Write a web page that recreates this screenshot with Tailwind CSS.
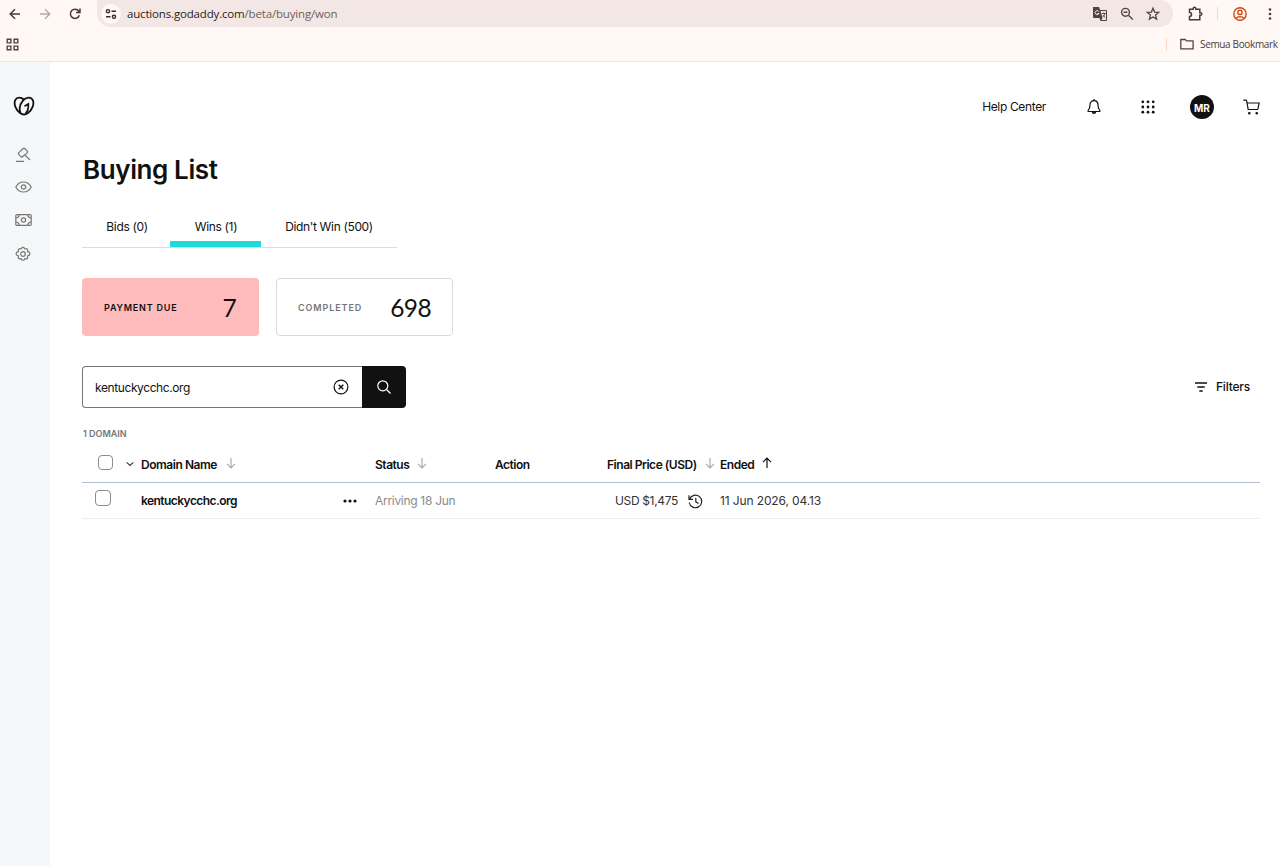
<!DOCTYPE html>
<html lang="en">

<head>
  <meta charset="UTF-8" />
  <meta name="viewport" content="width=device-width, initial-scale=1" />
  <script src="https://cdn.jsdelivr.net/npm/@tailwindcss/browser@4"></script>
  <title>Buying List</title>
</head>

<body class="flex flex-col h-screen overflow-hidden bg-white text-[#111] font-['Inter',sans-serif]">
  <!-- browser toolbar -->
  <header class="h-[62px] shrink-0 bg-[#fff8f5] border-b border-[#f6e3db] font-['Open_Sans',sans-serif] text-[#4d3b35]">
    <div class="flex items-center h-[27px]">
      <div class="flex items-center gap-[14px] pl-[7px] w-[97px] shrink-0">
        <svg class="size-4" viewBox="0 0 16 16" fill="none" stroke="#51372f" stroke-width="1.500"><path d="M13 8H3.500M8 3.200L3.200 8L8 12.800" /></svg>
        <svg class="size-4" viewBox="0 0 16 16" fill="none" stroke="#b5aaa6" stroke-width="1.400"><path d="M3 8h9.500M8 3.200L12.800 8L8 12.800" /></svg>
        <svg class="size-4" viewBox="0 0 16 16" fill="none" stroke="#51372f" stroke-width="1.500"><path d="M12.400 9.200A4.600 4.600 0 1 1 11.700 5L12.800 6.300M13 2.500v4H9" /></svg>
      </div>
      <div class="flex items-center h-[27px] w-[1076px] bg-[#f2e7e5] rounded-r-[14px] rounded-bl-[14px] pl-[4px] pr-[12px]">
        <div class="flex items-center justify-center size-5 rounded-full bg-[#fff8f5]">
          <svg class="size-3" viewBox="0 0 12 12" fill="none" stroke="#3b2d29" stroke-width="1.400"><circle cx="3" cy="3.200" r="1.600" /><path d="M6.500 3.200H11M1 8.800h4.500" /><circle cx="9" cy="8.800" r="1.600" /></svg>
        </div>
        <p class="ml-[6px] mt-px text-[11.500px] leading-4 tracking-[-0.17px] text-[#2b2220]">auctions.godaddy.com<span class="text-[#6e5f5a]">/beta/buying/won</span></p>
        <div class="flex items-center gap-[10.500px] ml-auto">
          <svg class="size-4" viewBox="0 0 16 16"><path d="M1 1h6l1.200 3H14a1 1 0 0 1 1 1v9a1 1 0 0 1-1 1H8.500l-1-3H2a1 1 0 0 1-1-1z" fill="#51433f" /><path d="M8.600 5H14v9H9.500l1-2z" fill="#f2e7e5" /><path d="M7 5.800A2 2 0 1 0 7 7.500H5.200" stroke="#f2e7e5" fill="none" /><path d="M9.800 7.500h4M11.800 6.500v1M13 7.500c-.4 1.700-1.300 2.800-2.500 3.700M11 9c.5 1 1.200 1.700 2.200 2.300" stroke="#51433f" stroke-width=".9" fill="none" /></svg>
          <svg class="size-4" viewBox="0 0 16 16" fill="none" stroke="#51433f" stroke-width="1.400"><circle cx="6.500" cy="6.300" r="3.900" /><path d="M9.400 9.200L13.800 13.500M4.600 6.300h3.800" /></svg>
          <svg class="size-4" viewBox="0 0 16 16" fill="none" stroke="#51433f" stroke-width="1.300"><path d="M8 2.300l1.600 3.800 4.100.3-3.100 2.700 1 4L8 10.900l-3.600 2.200 1-4L2.300 6.400l4.100-.3z" /></svg>
        </div>
      </div>
      <div class="flex items-center ml-[13px]">
        <svg class="size-[18px]" viewBox="0 0 18 18" fill="none" stroke="#51372f" stroke-width="1.500"><path d="M3.500 4.300h3.700V3.500a1 1 0 0 1 2.600 0v.8h4v3.400h.7a1.200 1.200 0 0 1 0 2.600h-.7v4.400H3.500v-3.200a1.900 1.900 0 0 0 0-4z" /></svg>
        <div class="w-px h-[13px] bg-[#fad7c5] ml-[13px]"></div>
        <svg class="size-4 ml-[14px]" viewBox="0 0 16 16" fill="none" stroke="#cf4b12" stroke-width="1.400"><circle cx="8" cy="8" r="6.200" /><circle cx="8" cy="6.400" r="2.100" /><path d="M3.800 12.400c2.300-2.200 6.100-2.200 8.400 0" /></svg>
        <svg class="w-1 h-3 ml-[20px]" viewBox="0 0 4 12" fill="#51372f"><circle cx="2" cy="1.500" r="1.300" /><circle cx="2" cy="6" r="1.300" /><circle cx="2" cy="10.500" r="1.300" /></svg>
      </div>
    </div>
    <div class="flex items-center h-[34px] pl-[6px] pr-[2px]">
      <svg class="size-[13px] shrink-0" viewBox="0 0 13 13" fill="none" stroke="#51433f" stroke-width="1.400"><path d="M1.200 1.200h3.700v3.700h-3.700zM8.100 1.200h3.700v3.700H8.100zM1.200 8.100h3.700v3.700h-3.700zM8.100 8.100h3.700v3.700H8.100z" /></svg>
      <div class="w-px h-[13px] bg-[#fad7c5] ml-auto"></div>
      <svg class="w-[14px] h-3 ml-[13px] shrink-0" viewBox="0 0 14 12" fill="none" stroke="#51433f" stroke-width="1.300"><path d="M.8 1.500h4.400l1.400 1.400h6.500v8H.8z" stroke-linejoin="round" /></svg>
      <span class="w-[78px] ml-[6px] mt-px text-[10px] whitespace-nowrap tracking-[-0.35px]">Semua Bookmark</span>
    </div>
  </header>

  <div class="flex flex-1 min-h-0">
    <aside class="flex flex-col items-center w-[50px] shrink-0 bg-[#f5f7f8] pr-[4px] pt-[34px] text-[#767676]">
      <svg class="w-[22px] h-5 ml-[2px]" viewBox="0 0 22 20" fill="none" stroke="#111" stroke-width="1.800"><path d="M11 3.700C8 .8 3.800.9 2.200 4.200C.5 8 2.800 13.800 7 17C9.600 18.900 12.400 18.900 15 17C19.200 13.800 21.500 8 19.800 4.200C18 .7 13.200.8 9.900 4.700C6.300 9 6 13.600 7.800 17.300" /><path d="M11.500 10.300L15.300 8v3.200C15.200 13.800 14.200 16 12.600 17.600" stroke-width="1.700" /></svg>
      <svg class="size-4 mt-[31px]" viewBox="0 0 16 16" fill="none" stroke="currentColor" stroke-width="1.200" stroke-linejoin="round"><path d="M8.200 1.500a1 1 0 0 1 1.400 0l2.700 2.700a1 1 0 0 1 0 1.400L7.500 9.800a1 1 0 0 1-1.400 0L3.700 7.300a1 1 0 0 1 0-1.400zM10 8l5 5M1 14.300h8" /></svg>
      <svg class="w-[17px] h-4 mt-[16px]" viewBox="0 0 17 16" fill="none" stroke="currentColor" stroke-width="1.200"><path d="M.8 8C2.500 4.800 5.200 3 8.500 3s6 1.800 7.700 5c-1.700 3.200-4.400 5-7.700 5S2.500 11.200.8 8z" /><circle cx="8.500" cy="8" r="2.200" /></svg>
      <svg class="w-[17px] h-4 mt-[17px]" viewBox="0 0 17 16" fill="none" stroke="currentColor" stroke-width="1.200"><rect x=".8" y="2.600" width="15.400" height="10.800" rx="1.200" /><circle cx="8.500" cy="8" r="2.200" /><path d="M1 6c1.800 0 3.300-1.500 3.300-3.300M16 6c-1.800 0-3.300-1.500-3.300-3.300M1 10c1.800 0 3.300 1.500 3.300 3.300M16 10c-1.800 0-3.300 1.500-3.300 3.300" /></svg>
      <svg class="size-4 mt-[18px]" viewBox="0 0 16 16" fill="none" stroke="currentColor" stroke-width="1.200" stroke-linejoin="round"><path d="M6.500 2.400a1.600 1.600 0 0 1 3 0l.3.600.7-.2a1.600 1.600 0 0 1 2.100 2.100l-.2.700.7.300a1.600 1.600 0 0 1 0 3.600l-.7.500.2.700a1.600 1.600 0 0 1-2.100 2.100l-.7-.2-.3.600a1.600 1.600 0 0 1-3 0l-.3-.6-.7.200a1.600 1.600 0 0 1-2.100-2.100l.2-.7-.7-.5a1.600 1.600 0 0 1 0-3.600l.7-.3-.2-.7a1.600 1.600 0 0 1 2.100-2.100l.7.200z" /><circle cx="8" cy="8" r="2.300" /></svg>
    </aside>

    <main class="flex-1 min-w-0 pl-[32px] pr-[20px]">
      <div class="flex items-center justify-end h-[24px] mt-[33px]">
        <a href="#" class="text-[12px] tracking-[-0.35px]">Help Center</a>
        <svg class="size-4 ml-[40px]" viewBox="0 0 16 16" fill="none" stroke="#111" stroke-width="1.200"><path d="M8 1.700c-2.600 0-4 1.800-4 4.200 0 2.800-.6 4.200-1.800 5.500-.4.600-.2 1.100.5 1.100h10.600c.7 0 .9-.5.5-1.100C12.600 10.100 12 8.700 12 5.900c0-2.400-1.400-4.200-4-4.200z" /><path d="M8 .3v1.400M6.500 13c.3 1.500 2.700 1.500 3 0" stroke-width="1.600" /></svg>
        <svg class="size-[14px] ml-[39px]" viewBox="0 0 14 14" fill="#111"><circle cx="1.800" cy="1.800" r="1.400" /><circle cx="7" cy="1.800" r="1.400" /><circle cx="12.200" cy="1.800" r="1.400" /><circle cx="1.800" cy="7" r="1.400" /><circle cx="7" cy="7" r="1.400" /><circle cx="12.200" cy="7" r="1.400" /><circle cx="1.800" cy="12.200" r="1.400" /><circle cx="7" cy="12.200" r="1.400" /><circle cx="12.200" cy="12.200" r="1.400" /></svg>
        <div class="flex items-center justify-center size-6 ml-[35px] rounded-full bg-[#111] text-white text-[10px] font-bold pt-[2px]">MR</div>
        <svg class="w-[17px] h-4 ml-[29px]" viewBox="0 0 17 16" fill="none" stroke="#111" stroke-width="1.200"><path d="M.3 1.200h2.400c.6 0 .9.300 1 .8l1.500 8.500h9.600M4.200 4h11.900l-1.300 6.500" /><circle cx="6.300" cy="14.200" r=".7" fill="#111" /><circle cx="13.700" cy="14.200" r=".7" fill="#111" /></svg>
      </div>

      <h1 class="mt-[35px] h-[31px] leading-[32px] text-[26px] font-semibold tracking-[-0.4px] ml-px">Buying List</h1>

      <nav class="flex w-[315px] h-[43px] mt-[20px] border-b border-[#dcdcdc] text-[12px] leading-[44px] tracking-[-0.35px]">
        <a href="#" class="w-[88px] pl-[2px] text-center">Bids (0)</a>
        <a href="#" class="w-[91px] pl-px h-[42px] text-center border-b-[6px] border-[#1bdbdb]">Wins (1)</a>
        <a href="#" class="w-[136px] text-center whitespace-nowrap">Didn't Win (500)</a>
      </nav>

      <div class="flex gap-[17px] mt-[30px]">
        <div class="flex items-center justify-between w-[177px] h-[58px] pl-[22px] pr-[23px] rounded bg-[#ffbbbb]">
          <span class="text-[9px] font-semibold tracking-[0.8px] pt-[2px]">PAYMENT DUE</span>
          <span class="font-['Lato',sans-serif] text-[24.500px] tracking-[-0.8px] pt-[3px]">7</span>
        </div>
        <div class="flex items-center justify-between w-[177px] h-[58px] pl-[21px] pr-[21px] rounded border border-[#d6dbde]">
          <span class="text-[9px] font-semibold tracking-[0.9px] text-[#767676] pt-[2px]">COMPLETED</span>
          <span class="font-['Lato',sans-serif] text-[24.500px] tracking-[-0.6px] pt-[3px]">698</span>
        </div>
      </div>

      <div class="flex items-center justify-between mt-[30px] h-[42px]">
        <div class="flex h-[42px]">
          <div class="flex items-center justify-between w-[280px] pl-[12px] pr-[13px] border border-r-0 border-[#767676] rounded-l">
            <span class="text-[12px] tracking-[-0.4px] pt-[2px]">kentuckycchc.org</span>
            <svg class="size-4" viewBox="0 0 16 16" fill="none" stroke="#111" stroke-width="1.200"><circle cx="8" cy="8" r="6.900" /><path d="M5.700 5.700l4.600 4.600M10.300 5.700l-4.600 4.600" stroke-width="1.400" /></svg>
          </div>
          <button class="flex items-center justify-center w-[44px] bg-[#111] rounded-r">
            <svg class="size-4" viewBox="0 0 16 16" fill="none" stroke="#fff" stroke-width="1.200"><circle cx="6.800" cy="6.800" r="5" /><path d="M10.500 10.500l4 4" /></svg>
          </button>
        </div>
        <button class="flex items-center mr-[10px] text-[12px] font-medium tracking-[-0.2px]">
          <svg class="w-3 h-[10px] mr-[9px]" viewBox="0 0 12 10" fill="none" stroke="#111" stroke-width="1.300"><path d="M0 1h12M2.300 5h7.400M4.300 9h3.400" /></svg>
          Filters
        </button>
      </div>

      <p class="mt-[20px] h-[12px] leading-[12px] text-[9px] font-semibold text-[#767676] pl-px">1 DOMAIN</p>

      <!-- table head -->
      <div class="grid grid-cols-[59px_234px_120px_112px_113px_1fr] items-center h-[43px] pt-[7px] border-b border-[#b2bfcb] text-[12px] font-semibold tracking-[-0.47px] whitespace-nowrap">
        <div class="flex items-center pl-[16px] pb-[5px]">
          <span class="size-[15px] border border-[#8c8c8c] rounded-[4px]"></span>
          <svg class="w-2 h-2 ml-[13px] mt-1" viewBox="0 0 8 8" fill="none" stroke="#333" stroke-width="1.100"><path d="M.7 2.300L4 5.400l3.300-3.100" /></svg>
        </div>
        <div class="flex items-center">Domain Name
          <svg class="w-[10px] h-3 ml-[9px] mb-1" viewBox="0 0 10 12" fill="none" stroke="#aaa" stroke-width="1.200"><path d="M5 1v10M1 6.800l4 4 4-4" /></svg>
        </div>
        <div class="flex items-center">Status
          <svg class="w-[10px] h-3 ml-[8px] mb-1" viewBox="0 0 10 12" fill="none" stroke="#aaa" stroke-width="1.200"><path d="M5 1v10M1 6.800l4 4 4-4" /></svg>
        </div>
        <div>Action</div>
        <div class="flex items-center">Final Price (USD)
          <svg class="w-[10px] h-3 ml-auto mr-[5px] mb-1" viewBox="0 0 10 12" fill="none" stroke="#aaa" stroke-width="1.200"><path d="M5 1v10M1 6.800l4 4 4-4" /></svg>
        </div>
        <div class="flex items-center">Ended
          <svg class="w-[10px] h-3 ml-[8px] mb-1" viewBox="0 0 10 12" fill="none" stroke="#111" stroke-width="1.200"><path d="M5 11V1M1 5.200l4-4 4 4" /></svg>
        </div>
      </div>

      <div class="grid grid-cols-[59px_234px_120px_112px_113px_1fr] items-center h-[36px] pt-px border-b border-[#ececec] text-[12px] whitespace-nowrap">
        <div class="pl-[13px] pb-[6px]"><span class="block size-[16px] border border-[#8c8c8c] rounded-[4px]"></span></div>
        <div class="flex items-center justify-between pr-[18px] font-semibold tracking-[-0.55px]">kentuckycchc.org
          <svg class="w-[14px] h-1" viewBox="0 0 14 4" fill="#111"><circle cx="2" cy="2" r="1.600" /><circle cx="7" cy="2" r="1.600" /><circle cx="12" cy="2" r="1.600" /></svg>
        </div>
        <div class="text-[#8a8a8a] tracking-[-0.3px]">Arriving 18 Jun</div>
        <div></div>
        <div class="flex items-center justify-between pl-[8px] pr-[17px] text-[#333] tracking-[-0.35px]">USD $1,475
          <svg class="size-[15px]" viewBox="0 0 15 15" fill="none" stroke="#222" stroke-width="1.200"><path d="M1.500 5.200A6.300 6.300 0 1 1 1.200 8.500M1 1.300v4h4M7.800 4v3.800l2.700 1.700" /></svg>
        </div>
        <div class="text-[#333] tracking-[-0.12px]">11 Jun 2026, 04.13</div>
      </div>
    </main>
  </div>
</body>

</html>
